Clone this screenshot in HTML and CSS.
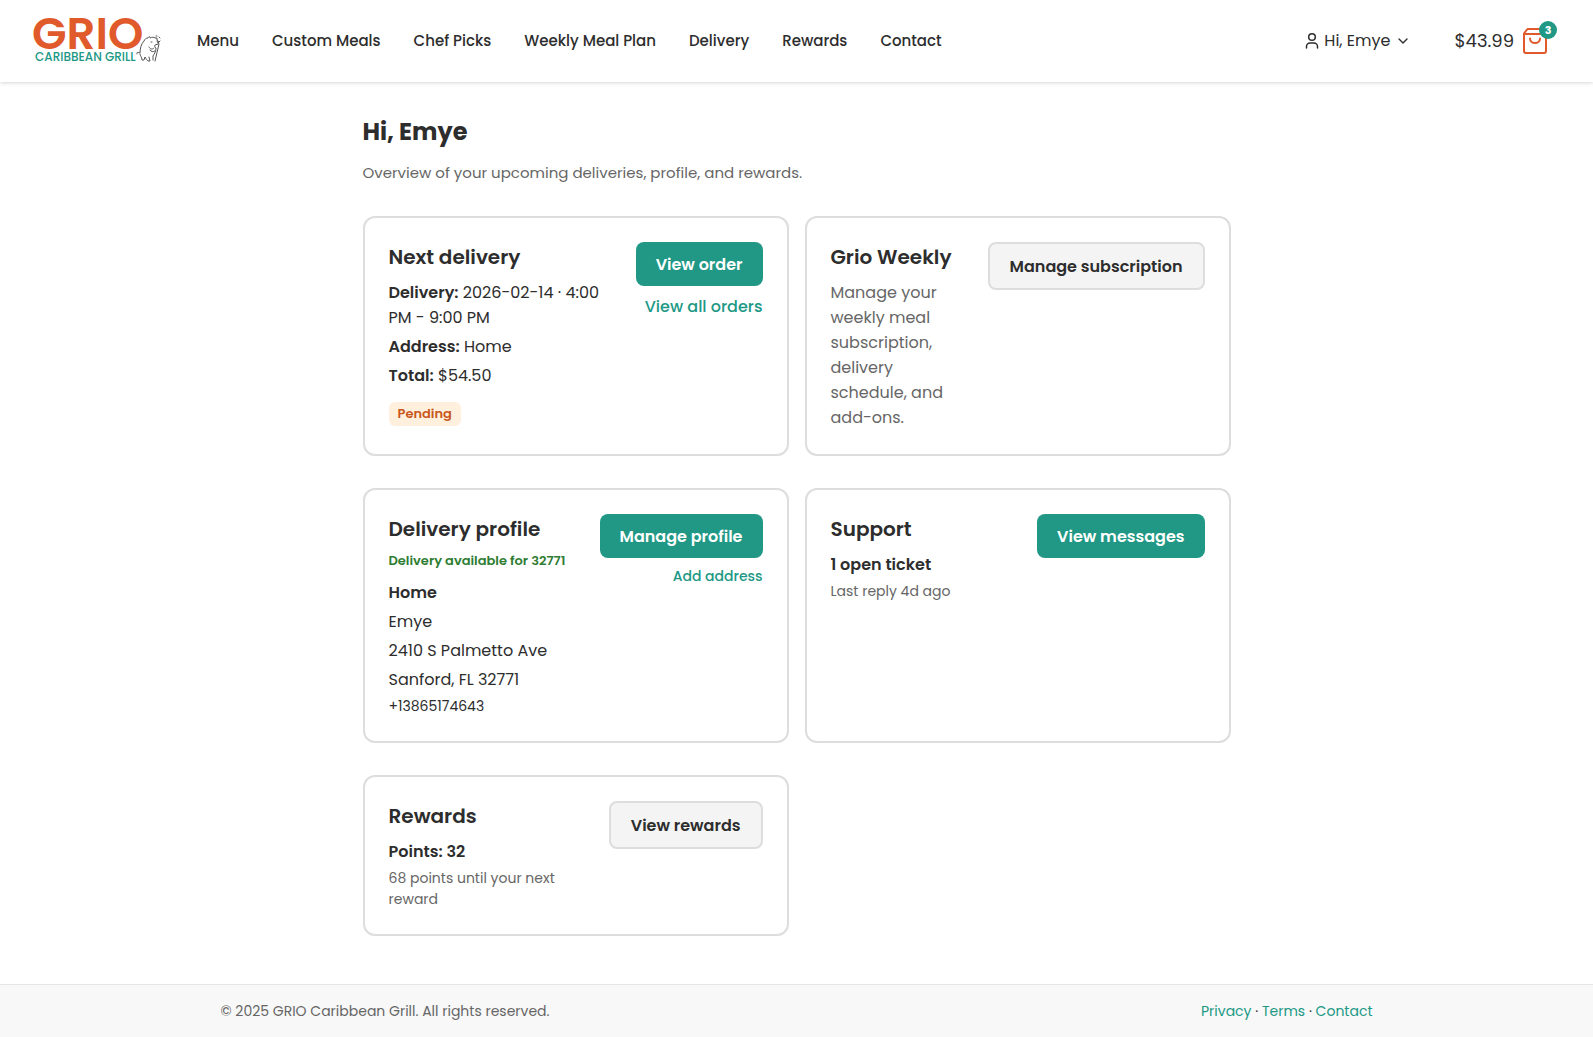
FILE: index.html
```html
<!DOCTYPE html>
<html lang="en">
<head>
  <meta charset="UTF-8" />
  <meta name="viewport" content="width=device-width, initial-scale=1.0" />
  <title>My Account | GRIO Caribbean Grill</title>
  <link rel="stylesheet" href="styles.css">
</head>
<body>

<header class="site-header">
  <a href="#" class="logo" aria-label="GRIO Caribbean Grill">
    <svg width="130" height="82" viewBox="0 -16 130 82">
      <text class="logo-name" x="0" y="33">GRIO</text>
      <text class="logo-tag" x="3" y="45">CARIBBEAN GRILL</text>
      <g fill="none" stroke="#555" stroke-width="1" stroke-linecap="round" stroke-linejoin="round">
        <path d="M105 38c-1-2 1-2 3-1c0-4 1-9 4-12c1-2 2-3 4-3c1-2 2-2 2 0c2-1 4-1 5 0l2 0l0 2c2 1 2 3 1 4l-3 1c-1 1 0 2 1 3c0 4-2 6-3 8l0 4" />
        <path d="M108 38c0 2 2 3 2 6l2 0l1-3c1 2 2 3 3 4l2 0l-1-4M117 31c1 2 3 3 5 1M118 34c1 2 3 2 5 1M119 26h1" />
        <path d="M127 28l-4 17M125 25l1 2l2-2M124 20h1M127 21l1 1" />
      </g>
    </svg>
  </a>
  <nav class="main-nav">
    <a href="#">Menu</a>
    <a href="#">Custom Meals</a>
    <a href="#">Chef Picks</a>
    <a href="#">Weekly Meal Plan</a>
    <a href="#">Delivery</a>
    <a href="#">Rewards</a>
    <a href="#">Contact</a>
  </nav>
  <button type="button" class="user-menu">
    <svg width="16" height="18" viewBox="0 0 16 18" fill="none" stroke="currentColor" stroke-width="1.5" stroke-linecap="round">
      <circle cx="8" cy="5" r="3.3" />
      <path d="M2.5 16v-1.5a3.5 3.5 0 0 1 3.5-3.5h4a3.5 3.5 0 0 1 3.5 3.5V16" />
    </svg>
    <span>Hi, Emye</span>
    <svg class="chevron" width="10" height="6" viewBox="0 0 10 6" fill="none" stroke="currentColor" stroke-width="1.4" stroke-linecap="round" stroke-linejoin="round">
      <path d="M1 1l4 4l4-4" />
    </svg>
  </button>
  <a href="#" class="cart">
    <span>$43.99</span>
    <span class="cart-icon">
      <svg width="26" height="28" viewBox="0 0 26 28" fill="none" stroke="#e05a2b" stroke-width="2" stroke-linecap="round" stroke-linejoin="round">
        <path d="M5.500 2h15l3.500 4.500v17.500a2 2 0 0 1-2 2h-18a2 2 0 0 1-2-2v-17.500z" />
        <path d="M2 7h22M8 11.500a5 4.500 0 0 0 10 0" />
      </svg>
      <span class="cart-badge">3</span>
    </span>
  </a>
</header>

<main class="account">
  <h1>Hi, Emye</h1>
  <p class="intro">Overview of your upcoming deliveries, profile, and rewards.</p>

  <div class="card-grid">
    <section class="card">
      <div class="card-body">
        <h2>Next delivery</h2>
        <p><strong>Delivery:</strong> 2026-02-14 · 4:00 PM - 9:00 PM</p>
        <p><strong>Address:</strong> Home</p>
        <p><strong>Total:</strong> $54.50</p>
        <span class="status">Pending</span>
      </div>
      <div class="card-actions">
        <button type="button" class="btn">View order</button>
        <a href="#">View all orders</a>
      </div>
    </section>

    <section class="card">
      <div class="card-body">
        <h2>Grio Weekly</h2>
        <p class="muted">Manage your weekly meal subscription, delivery schedule, and add-ons.</p>
      </div>
      <div class="card-actions">
        <button type="button" class="btn btn-light">Manage subscription</button>
      </div>
    </section>

    <section class="card">
      <div class="card-body">
        <h2>Delivery profile</h2>
        <p class="available">Delivery available for 32771</p>
        <p><strong>Home</strong></p>
        <p>Emye</p>
        <p>2410 S Palmetto Ave</p>
        <p>Sanford, FL 32771</p>
        <p class="small">+13865174643</p>
      </div>
      <div class="card-actions">
        <button type="button" class="btn">Manage profile</button>
        <a href="#" class="small">Add address</a>
      </div>
    </section>

    <section class="card">
      <div class="card-body">
        <h2>Support</h2>
        <p><strong>1 open ticket</strong></p>
        <p class="small muted">Last reply 4d ago</p>
      </div>
      <div class="card-actions">
        <button type="button" class="btn">View messages</button>
      </div>
    </section>

    <section class="card">
      <div class="card-body">
        <h2>Rewards</h2>
        <p><strong>Points: 32</strong></p>
        <p class="small muted">68 points until your next reward</p>
      </div>
      <div class="card-actions">
        <button type="button" class="btn btn-light">View rewards</button>
      </div>
    </section>
  </div>
</main>

<footer class="site-footer">
  <div class="footer-inner">
    <span class="copyright">© 2025 GRIO Caribbean Grill. All rights reserved.</span>
    <span><a href="#">Privacy</a> · <a href="#">Terms</a> · <a href="#">Contact</a></span>
  </div>
</footer>

</body>
</html>
```
FILE: styles.css
```css
:root {
  --teal: #209885;
  --orange: #e05a2b;
  --text: #2d2d2d;
  --muted: #666;
  --border: #ddd;
}
* {
  box-sizing: border-box;
}
body {
  margin: 0;
  min-height: 100vh;
  display: flex;
  flex-direction: column;
  font-family: "Poppins", "Inter", sans-serif;
  font-size: 16px;
  line-height: 25px;
  color: var(--text);
  background: #fff;
}
a {
  color: var(--teal);
  text-decoration: none;
}
button {
  font: inherit;
  cursor: pointer;
}

/* header */
.site-header {
  display: flex;
  align-items: center;
  height: 82px;
  padding: 0 32px;
  box-shadow: 0 1px 4px rgba(0,0,0,0.16);
}
.logo {
  display: flex;
}
.logo-name {
  font-size: 45px;
  font-weight: 600;
  fill: var(--orange);
}
.logo-tag {
  font-size: 12px;
  font-weight: 500;
  fill: var(--teal);
}
.main-nav {
  display: flex;
  gap: 33px;
  margin-left: 35px;
  font-size: 15px;
  line-height: 24px;
  white-space: nowrap;
}
.main-nav a {
  color: var(--text);
  font-weight: 500;
}
.user-menu {
  display: flex;
  align-items: center;
  gap: 4px;
  margin-left: auto;
  padding: 0;
  border: none;
  background: none;
  color: var(--text);
  line-height: 24px;
  white-space: nowrap;
}
.chevron {
  margin-left: 4px;
}
.cart {
  display: flex;
  align-items: center;
  gap: 8px;
  margin-left: 46px;
  margin-right: 13px;
  color: var(--text);
  font-size: 18px;
  line-height: 24px;
}
.cart-icon {
  position: relative;
  display: flex;
}
.cart-badge {
  position: absolute;
  top: -6px;
  right: -9px;
  width: 18px;
  height: 18px;
  border-radius: 50%;
  background: var(--teal);
  color: #fff;
  font-size: 11px;
  font-weight: 700;
  line-height: 18px;
  text-align: center;
}

/* account */
.account {
  width: 100%;
  max-width: 900px;
  margin: 0 auto;
  padding: 32px 16px 48px;
}
h1 {
  margin: 0 0 10px;
  font-size: 24px;
  font-weight: 700;
  line-height: 36px;
}
.intro {
  margin: 0 0 31px;
  color: var(--muted);
  font-size: 15px;
}
.card-grid {
  display: grid;
  grid-template-columns: 1fr 1fr;
  gap: 32px 16px;
}
.card {
  display: flex;
  justify-content: space-between;
  gap: 16px;
  padding: 24px;
  border: 2px solid var(--border);
  border-radius: 12px;
}
h2 {
  margin: 0 0 8px;
  font-size: 20px;
  font-weight: 600;
  line-height: 30px;
}
.card p {
  margin: 0 0 4px;
}
.card p:last-child {
  margin-bottom: 0;
}
strong {
  font-weight: 600;
}
.muted {
  color: var(--muted);
}
.small {
  font-size: 14px;
  line-height: 21px;
}
.card .available {
  margin-bottom: 10px;
  color: #2e7d32;
  font-size: 13px;
  font-weight: 600;
  line-height: 18px;
}
.status {
  display: inline-block;
  margin: 10px 0 4px;
  padding: 0 9px;
  border-radius: 6px;
  background: #fff0de;
  color: #c8571b;
  font-size: 13px;
  font-weight: 600;
  line-height: 24px;
  vertical-align: top;
}
.card-actions {
  display: flex;
  flex-direction: column;
  align-items: flex-end;
  gap: 8px;
  flex-shrink: 0;
}
.card-actions a {
  font-weight: 500;
}
.btn {
  padding: 11px 20px 9px;
  border: none;
  border-radius: 8px;
  background: var(--teal);
  color: #fff;
  font-weight: 600;
  line-height: 24px;
  white-space: nowrap;
}
.btn-light {
  border: 2px solid var(--border);
  background: #f4f4f4;
  color: var(--text);
}

/* footer */
.site-footer {
  margin-top: auto;
  border-top: 1px solid #e5e5e5;
  background: #f8f8f8;
  font-size: 14px;
  line-height: 20px;
}
.footer-inner {
  display: flex;
  justify-content: space-between;
  max-width: 1200px;
  margin: 0 auto;
  padding: 16px 24px;
}
.copyright {
  color: var(--muted);
}
```
